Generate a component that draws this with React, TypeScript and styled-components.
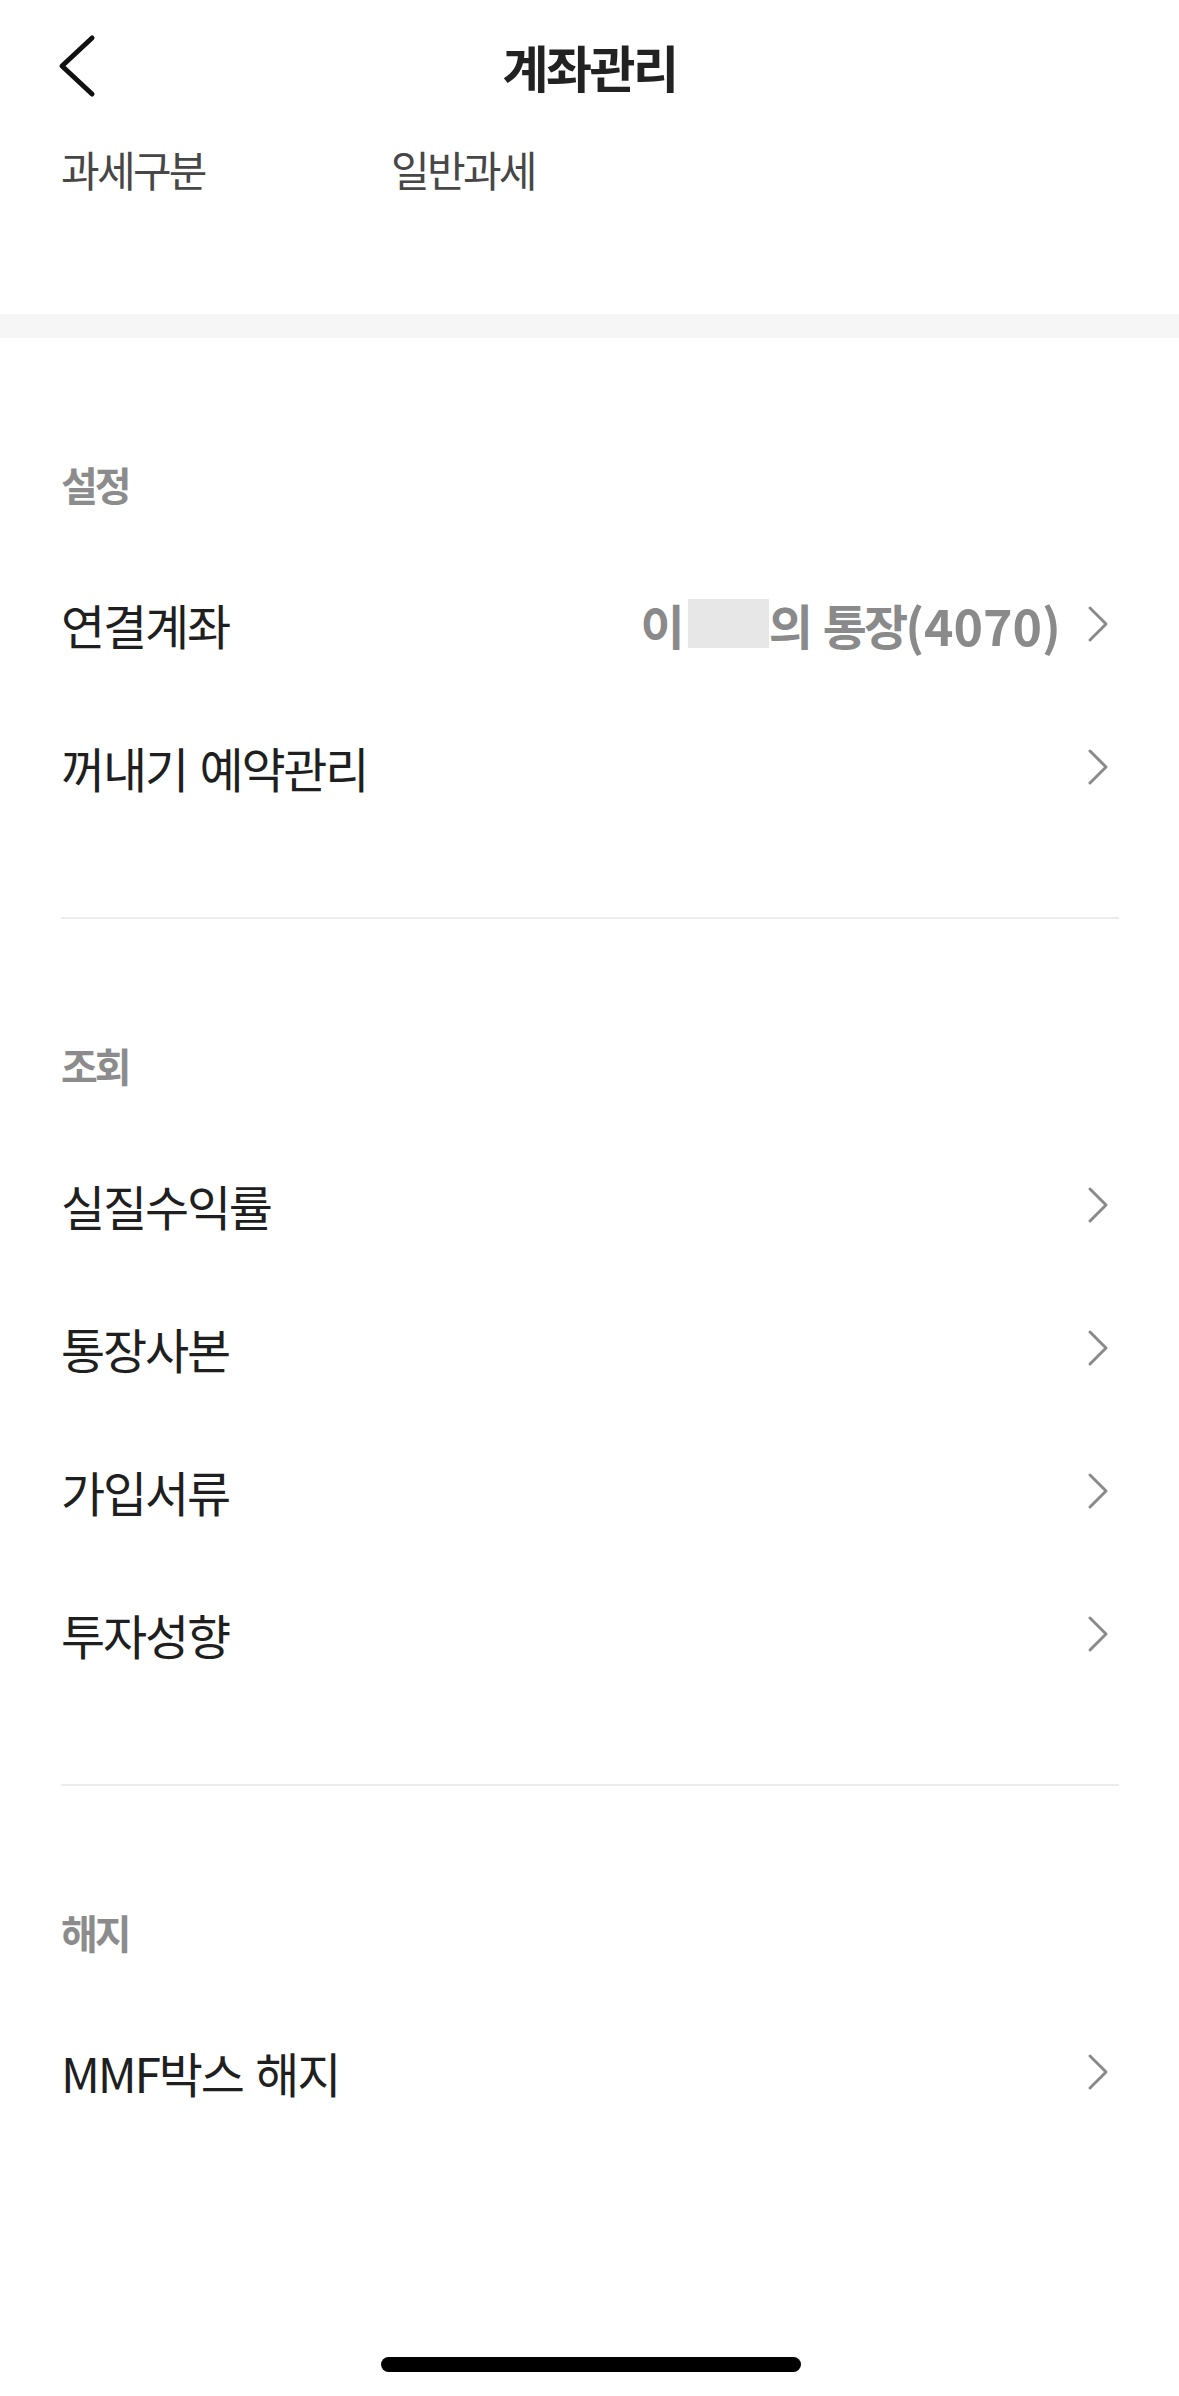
import React from 'react'
import styled, { createGlobalStyle } from 'styled-components'

const GlobalStyle = createGlobalStyle`
  html, body {
    margin: 0;
    padding: 0;
    background: #fff;
  }
  body {
    font-family: "Noto Sans CJK KR", "Noto Sans", sans-serif;
    color: #1f1f1f;
  }
`

const Page = styled.div`
  width: 1179px;
  min-height: 100vh;
  display: flex;
  flex-direction: column;
  background: #fff;
`

const Header = styled.header`
  height: 132px;
  display: grid;
  grid-template-columns: 1fr auto 1fr;
  align-items: center;
`

const BackButton = styled.button`
  justify-self: start;
  border: 0;
  background: none;
  padding: 0 0 0 50px;
  display: flex;
  align-items: center;
  cursor: pointer;
`

const Title = styled.h1`
  margin: 0;
  font-size: 50px;
  font-weight: 700;
  letter-spacing: -2.5px;
  color: #222;
`

const InfoRow = styled.div`
  display: flex;
  align-items: center;
  height: 72px;
  padding: 0 61px;
  margin-bottom: 110px;
  font-size: 42px;
  letter-spacing: -2.7px;
  color: #474747;
`

const InfoLabel = styled.span`
  width: 330px;
`

const Band = styled.div`
  height: 24px;
  background: #f6f6f6;
`

const Section = styled.section<{ $last?: boolean }>`
  padding: 111px 0 ${p => (p.$last ? '0' : '79px')};
`

const SectionLabel = styled.h2`
  margin: 0 0 33px;
  height: 70px;
  line-height: 70px;
  padding: 0 61px;
  font-size: 40px;
  font-weight: 700;
  letter-spacing: -3px;
  color: #8c8c8c;
`

const Row = styled.div`
  display: flex;
  align-items: center;
  height: 143px;
  padding: 0 67px 0 61px;
  cursor: pointer;
`

const RowTitle = styled.span`
  flex: 1;
  font-size: 48px;
  letter-spacing: -2.2px;
  word-spacing: 4px;
  color: #1f1f1f;
  white-space: nowrap;
`

const Value = styled.span`
  display: flex;
  align-items: center;
  margin-right: 21px;
  font-size: 48px;
  font-weight: 700;
  letter-spacing: -3px;
  color: #8a8a8a;
  white-space: pre;
`

const Gap = styled.span`
  display: inline-block;
  width: 13px;
`

const Masked = styled.span`
  display: inline-block;
  width: 81px;
  height: 49px;
  margin-left: 6px;
  background: #e7e7e7;
`

const Num = styled.span`
  font-size: 50px;
  letter-spacing: 0;
`

const Divider = styled.div`
  height: 2px;
  margin: 0 60px 0 61px;
  background: #ececec;
`

const Spacer = styled.div`
  flex: 1;
`

const HomeIndicator = styled.div`
  width: 420px;
  height: 15px;
  border-radius: 8px;
  background: #000;
  margin: 0 auto 24px;
  position: relative;
  left: 1px;
`

const Chevron = () => (
  <svg width="30" height="44" viewBox="0 0 30 44" fill="none">
    <path d="M8 6 L24 22 L8 38" stroke="#8a8a8a" strokeWidth="3" strokeLinecap="round" strokeLinejoin="round" />
  </svg>
)

const BackIcon = () => (
  <svg width="54" height="80" viewBox="0 0 54 80" fill="none">
    <path d="M42 12 L12 40 L42 68" stroke="#111" strokeWidth="5" strokeLinecap="round" strokeLinejoin="round" />
  </svg>
)

type Item = { title: React.ReactNode; value?: React.ReactNode }

const sections: { label: string; items: Item[] }[] = [
  {
    label: '설정',
    items: [
      {
        title: '연결계좌',
        value: (
          <>
            이<Masked />의<Gap />통장<Num>(4070)</Num>
          </>
        )
      },
      { title: '꺼내기 예약관리' }
    ]
  },
  {
    label: '조회',
    items: [
      { title: '실질수익률' },
      { title: '통장사본' },
      { title: '가입서류' },
      { title: '투자성향' }
    ]
  },
  {
    label: '해지',
    items: [{ title: 'MMF박스 해지' }]
  }
]

const App = () => {
  return (
    <>
      <GlobalStyle />
      <Page>
        <Header>
          <BackButton type="button" aria-label="뒤로">
            <BackIcon />
          </BackButton>
          <Title>계좌관리</Title>
          <span />
        </Header>
        <InfoRow>
          <InfoLabel>과세구분</InfoLabel>
          <span>일반과세</span>
        </InfoRow>
        <Band />
        {sections.map((s, i) => (
          <React.Fragment key={s.label}>
            {i > 0 && <Divider />}
            <Section $last={i === sections.length - 1}>
              <SectionLabel>{s.label}</SectionLabel>
              {s.items.map((it, j) => (
                <Row key={j}>
                  <RowTitle>{it.title}</RowTitle>
                  {it.value && <Value>{it.value}</Value>}
                  <Chevron />
                </Row>
              ))}
            </Section>
          </React.Fragment>
        ))}
        <Spacer />
        <HomeIndicator />
      </Page>
    </>
  )
}

export default App
